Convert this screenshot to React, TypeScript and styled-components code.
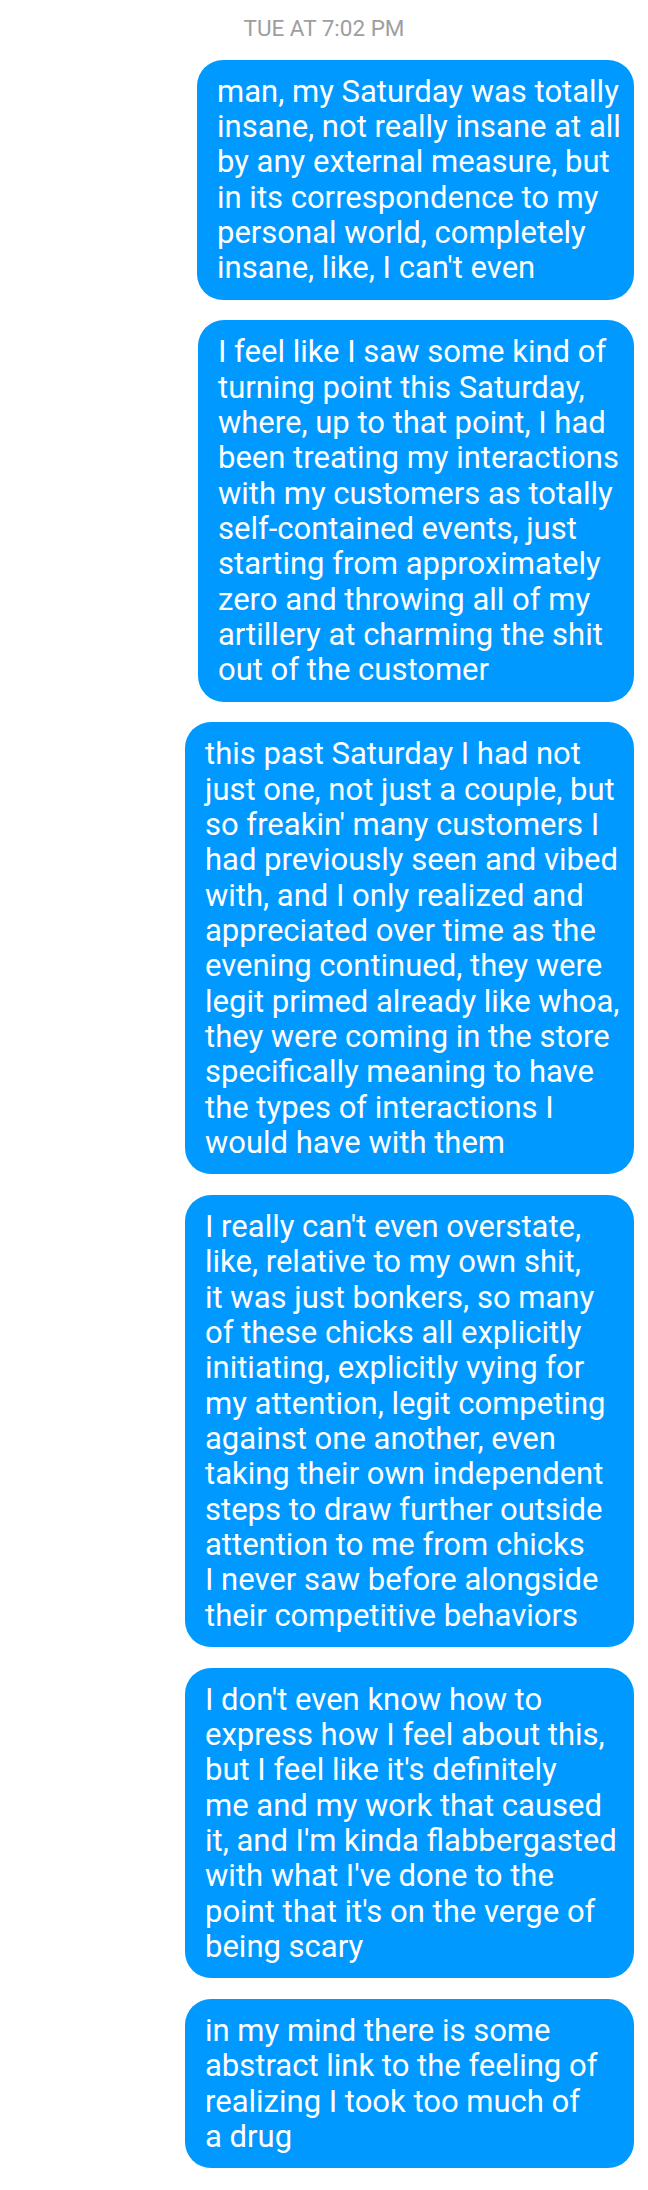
import React from "react";
import styled, { createGlobalStyle } from "styled-components";

const Global = createGlobalStyle`
  html, body {
    margin: 0;
    padding: 0;
    background: #ffffff;
  }
  body {
    font-family: Roboto, "Noto Sans", "Liberation Sans", sans-serif;
  }
`;

const Thread = styled.main`
  display: flex;
  flex-direction: column;
  align-items: flex-end;
  gap: 20.6px;
  padding: 15px 14px 0 0;
  min-height: 2190px;
  box-sizing: border-box;
`;

const Stamp = styled.div`
  align-self: stretch;
  text-align: center;
  font-size: 22.5px;
  line-height: 26px;
  color: #9e9e9e;
  padding-left: 14px;
  margin-bottom: -2px;
`;

const Bubble = styled.div<{ $width: number }>`
  width: ${(p) => p.$width}px;
  box-sizing: border-box;
  padding: 14px 20px;
  background: #0099ff;
  color: #ffffff;
  border-radius: 26px;
  font-size: 31px;
  line-height: 35.35px;
  white-space: pre;
`;

const messages: { width: number; lines: string[] }[] = [
  {
    width: 437,
    lines: [
      "man, my Saturday was totally",
      "insane, not really insane at all",
      "by any external measure, but",
      "in its correspondence to my",
      "personal world, completely",
      "insane, like, I can't even",
    ],
  },
  {
    width: 436,
    lines: [
      "I feel like I saw some kind of",
      "turning point this Saturday,",
      "where, up to that point, I had",
      "been treating my interactions",
      "with my customers as totally",
      "self-contained events, just",
      "starting from approximately",
      "zero and throwing all of my",
      "artillery at charming the shit",
      "out of the customer",
    ],
  },
  {
    width: 449,
    lines: [
      "this past Saturday I had not",
      "just one, not just a couple, but",
      "so freakin' many customers I",
      "had previously seen and vibed",
      "with, and I only realized and",
      "appreciated over time as the",
      "evening continued, they were",
      "legit primed already like whoa,",
      "they were coming in the store",
      "specifically meaning to have",
      "the types of interactions I",
      "would have with them",
    ],
  },
  {
    width: 449,
    lines: [
      "I really can't even overstate,",
      "like, relative to my own shit,",
      "it was just bonkers, so many",
      "of these chicks all explicitly",
      "initiating, explicitly vying for",
      "my attention, legit competing",
      "against one another, even",
      "taking their own independent",
      "steps to draw further outside",
      "attention to me from chicks",
      "I never saw before alongside",
      "their competitive behaviors",
    ],
  },
  {
    width: 449,
    lines: [
      "I don't even know how to",
      "express how I feel about this,",
      "but I feel like it's definitely",
      "me and my work that caused",
      "it, and I'm kinda flabbergasted",
      "with what I've done to the",
      "point that it's on the verge of",
      "being scary",
    ],
  },
  {
    width: 449,
    lines: [
      "in my mind there is some",
      "abstract link to the feeling of",
      "realizing I took too much of",
      "a drug",
    ],
  },
];

export default function App() {
  return (
    <>
      <Global />
      <Thread>
        <Stamp>TUE AT 7:02 PM</Stamp>
        {messages.map((m, i) => (
          <Bubble key={i} $width={m.width}>
            {m.lines.join("\n")}
          </Bubble>
        ))}
      </Thread>
    </>
  );
}
